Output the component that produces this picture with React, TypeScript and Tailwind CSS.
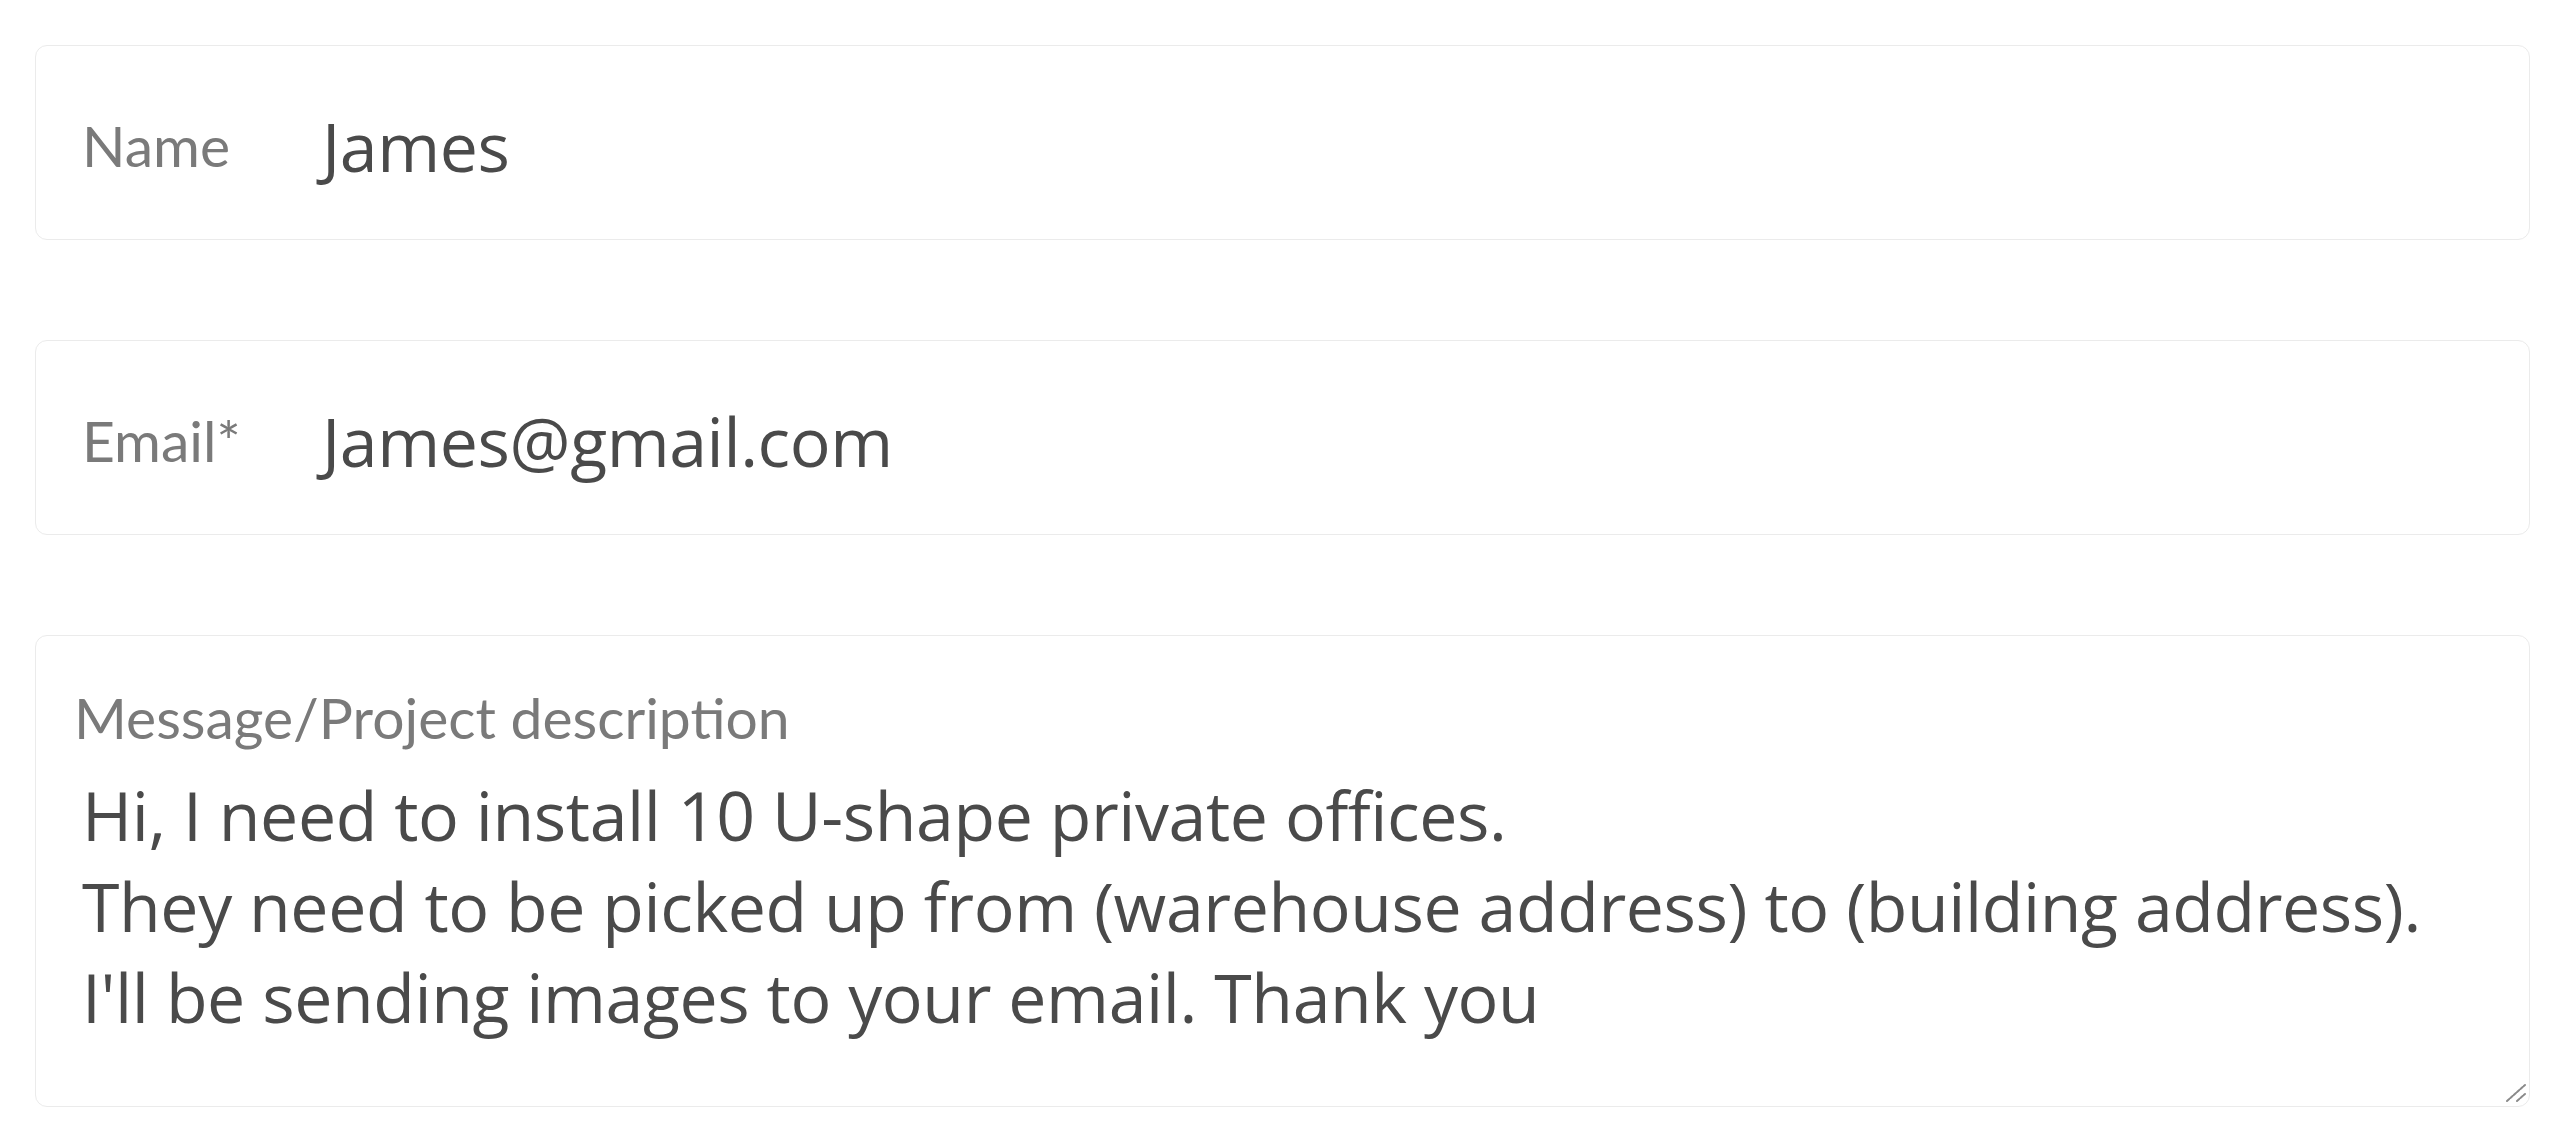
import React from 'react';

const Field = ({ label, value }: { label: string; value: string }) => (
  <div className="flex items-center h-[195px] border border-[#ebebeb] rounded-[12px] pl-[46px] pt-[6px]">
    <span className="w-[240px] shrink-0 font-['Lato',sans-serif] text-[57px] leading-[1.2] text-[#7a7a7a]">
      {label}
    </span>
    <span className="font-['Open_Sans',sans-serif] text-[68px] tracking-[-0.4px] leading-[1.2] text-[#4a4a4a]">
      {value}
    </span>
  </div>
);

const ResizeGrip = () => (
  <svg className="absolute right-[2px] bottom-[2px] w-[24px] h-[24px]" viewBox="0 0 24 24" fill="none">
    <path d="M4 21 L22 5" stroke="#8a8a8a" strokeWidth="2" strokeLinecap="round" strokeDasharray="3 1.5" />
    <path d="M14 21 L22 14" stroke="#8a8a8a" strokeWidth="2" strokeLinecap="round" strokeDasharray="3 1.5" />
  </svg>
);

const App = () => {
  const lines = [
    'Hi, I need to install 10 U-shape private offices.',
    'They need to be picked up from (warehouse address) to (building address).',
    "I'll be sending images to your email. Thank you",
  ];

  return (
    <div className="w-full h-[1142px] bg-white pl-[35px] pr-[30px] pt-[45px] flex flex-col gap-[100px]">
      <Field label="Name" value="James" />
      <Field label="Email*" value="James@gmail.com" />
      <div className="relative h-[472px] border border-[#ebebeb] rounded-[12px] pt-[47px] pl-[38px]">
        <div className="font-['Lato',sans-serif] text-[57px] leading-[1.2] text-[#7a7a7a]">
          Message/Project description
        </div>
        <div className="mt-[18px] pl-[8px] font-['Open_Sans',sans-serif] text-[68px] tracking-[-0.4px] leading-[91px] text-[#4a4a4a]">
          {lines.map(l => (
            <div key={l}>{l}</div>
          ))}
        </div>
        <ResizeGrip />
      </div>
    </div>
  );
};

export default App;
